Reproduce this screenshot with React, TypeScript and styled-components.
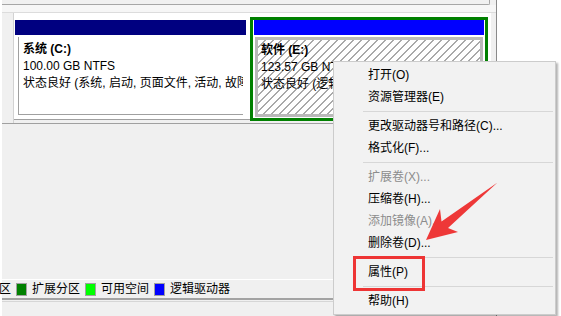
import React from "react";
import styled, { createGlobalStyle } from "styled-components";

const Global = createGlobalStyle`
  *, *::before, *::after { box-sizing: border-box; }
  html, body { margin: 0; padding: 0; background: #ffffff; }
  body {
    width: 561px;
    height: 316px;
    overflow: hidden;
    font-family: "Liberation Sans", "Noto Sans CJK SC", sans-serif;
    font-size: 12px;
    color: #000;
  }
`;

const Stage = styled.div`
  position: relative;
  width: 561px;
  height: 316px;
  overflow: hidden;
  background: #ffffff;
`;

const Window = styled.div`
  margin-left: 2px;
  width: 495px;
  height: 316px;
  background: #f0f0f0;
  border-right: 1px solid #8a8a8a;
  display: flex;
  flex-direction: column;
`;

const TopPane = styled.div`
  height: 5px;
  margin-right: 6px;
  background: #f0f0f0;
  border-bottom: 1px solid #a6a6a6;
  border-right: 1px solid #a6a6a6;
  border-bottom-right-radius: 2px;
`;

const Splitter = styled.div`
  height: 8px;
  background: #f6f6f6;
  border-bottom: 1px solid #dcdcdc;
`;

const DiskRow = styled.div`
  display: flex;
  height: 111px;
  border-bottom: 1px solid #a0a0a0;
`;

const DiskLabel = styled.div`
  width: 12px;
  background: #f0f0f0;
  border-right: 1px solid #d2d2d2;
`;

const PartArea = styled.div`
  width: 477px;
  height: 107px;
  padding-top: 4px;
  background: #ffffff;
  border-bottom: 1px solid #a0a0a0;
  display: flex;
  align-items: flex-start;
`;

const Partition = styled.div<{ $selected?: boolean }>`
  display: flex;
  flex-direction: column;
  background: #ffffff;
  ${(p) =>
    p.$selected
      ? `
    margin-left: 4px;
    width: 238px;
    height: 104px;
    border: 3px solid #008000;
    padding: 0 1px;
  `
      : `
    margin-left: 1px;
    margin-top: 3px;
    width: 231px;
    height: 99px;
  `}
`;

const PartHeader = styled.div<{ $color: string }>`
  height: 15px;
  flex: none;
  background: ${(p) => p.$color};
`;

const PlainBody = styled.div`
  flex: 1;
  padding: 2px 3px 4px 3px;
  display: flex;
`;

const PlainInner = styled.div`
  flex: 1;
  min-width: 0;
  border-left: 1px solid #a0a0a0;
  border-bottom: 1px solid #a0a0a0;
  padding: 4px 0 0 4px;
  overflow: hidden;
`;

const HatchBody = styled.div`
  flex: 1;
  padding: 2px 1px 1px 1px;
  display: flex;
`;

const HatchInner = styled.div`
  flex: 1;
  min-width: 0;
  border: 3px solid #b9b9b9;
  padding: 2px 0 0 3px;
  overflow: hidden;
  background: repeating-linear-gradient(
    135deg,
    #ffffff 0px,
    #ffffff 4.6px,
    #a9a9a9 4.6px,
    #a9a9a9 5.66px
  );
`;

const PartLine = styled.div<{ $bold?: boolean }>`
  height: 17px;
  line-height: 17px;
  white-space: nowrap;
  font-weight: ${(p) => (p.$bold ? 700 : 400)};
`;

const Filler = styled.div`
  flex: 1;
`;

const Legend = styled.div`
  height: 21px;
  flex: none;
  border-top: 1px solid #ffffff;
  border-bottom: 2px solid #a3a3a3;
  display: flex;
  align-items: center;
  gap: 5px;
  white-space: nowrap;
`;

const LegendText = styled.span<{ $lead?: boolean }>`
  line-height: 14px;
  margin-left: ${(p) => (p.$lead ? "-3px" : "0")};
`;

const Swatch = styled.span<{ $color: string }>`
  display: inline-block;
  width: 11px;
  height: 13px;
  background: ${(p) => p.$color};
  border: 1px solid #a0a0a0;
`;

const Bottom = styled.div`
  flex: none;
  margin-top: 1px;
  height: 15px;
  border-top: 1px solid #d6d6d6;
`;

const Menu = styled.div`
  position: absolute;
  left: 333px;
  top: 61px;
  width: 223px;
  padding: 2px 0;
  background: #f2f2f2;
  border: 1px solid #cccccc;
  box-shadow: 2px 2px 2px rgba(0, 0, 0, 0.3);
`;

const MenuItem = styled.div<{ $disabled?: boolean }>`
  height: 22px;
  line-height: 22px;
  padding-left: 34px;
  white-space: nowrap;
  color: ${(p) => (p.$disabled ? "#8c8c8c" : "#000000")};
`;

const MenuSep = styled.div`
  height: 7px;
  margin: 0 2px 0 29px;
  display: flex;
  align-items: center;
  &::after {
    content: "";
    flex: 1;
    height: 1px;
    background: #d7d7d7;
  }
`;

const Highlight = styled.div`
  position: absolute;
  left: 353px;
  top: 256px;
  width: 72px;
  height: 35px;
  border: 3px solid #ee3535;
`;

const Overlay = styled.svg`
  position: absolute;
  left: 0;
  top: 0;
  pointer-events: none;
`;

type Item = { label: string; disabled?: boolean } | "sep";

const menuItems: Item[] = [
  { label: "打开(O)" },
  { label: "资源管理器(E)" },
  "sep",
  { label: "更改驱动器号和路径(C)..." },
  { label: "格式化(F)..." },
  "sep",
  { label: "扩展卷(X)...", disabled: true },
  { label: "压缩卷(H)..." },
  { label: "添加镜像(A)...", disabled: true },
  { label: "删除卷(D)..." },
  "sep",
  { label: "属性(P)" },
  "sep",
  { label: "帮助(H)" },
];

const legend = [
  { color: "#008000", label: "扩展分区" },
  { color: "#00ff00", label: "可用空间" },
  { color: "#0000ff", label: "逻辑驱动器" },
];

export default function App() {
  return (
    <Stage>
      <Global />
      <Window>
        <TopPane />
        <Splitter />
        <DiskRow>
          <DiskLabel />
          <PartArea>
            <Partition>
              <PartHeader $color="#000080" />
              <PlainBody>
                <PlainInner>
                  <PartLine $bold>系统 (C:)</PartLine>
                  <PartLine>100.00 GB NTFS</PartLine>
                  <PartLine>状态良好 (系统, 启动, 页面文件, 活动, 故障转储, 主分区)</PartLine>
                </PlainInner>
              </PlainBody>
            </Partition>
            <Partition $selected>
              <PartHeader $color="#0000ff" />
              <HatchBody>
                <HatchInner>
                  <PartLine $bold>软件 (E:)</PartLine>
                  <PartLine>123.57 GB NTFS</PartLine>
                  <PartLine>状态良好 (逻辑驱动器)</PartLine>
                </HatchInner>
              </HatchBody>
            </Partition>
          </PartArea>
        </DiskRow>
        <Filler />
        <Legend>
          <LegendText $lead>区</LegendText>
          {legend.map((l) => (
            <React.Fragment key={l.label}>
              <Swatch $color={l.color} />
              <LegendText>{l.label}</LegendText>
            </React.Fragment>
          ))}
        </Legend>
        <Bottom />
      </Window>

      <Menu>
        {menuItems.map((it, i) =>
          it === "sep" ? (
            <MenuSep key={i} />
          ) : (
            <MenuItem key={i} $disabled={it.disabled}>
              {it.label}
            </MenuItem>
          )
        )}
      </Menu>

      <Highlight />
      <Overlay width="561" height="316" viewBox="0 0 561 316">
        <polygon
          points="497.5,182.5 448,228 458,232 426,240 440,209 441.5,221.5"
          fill="#ee3838"
        />
      </Overlay>
    </Stage>
  );
}
